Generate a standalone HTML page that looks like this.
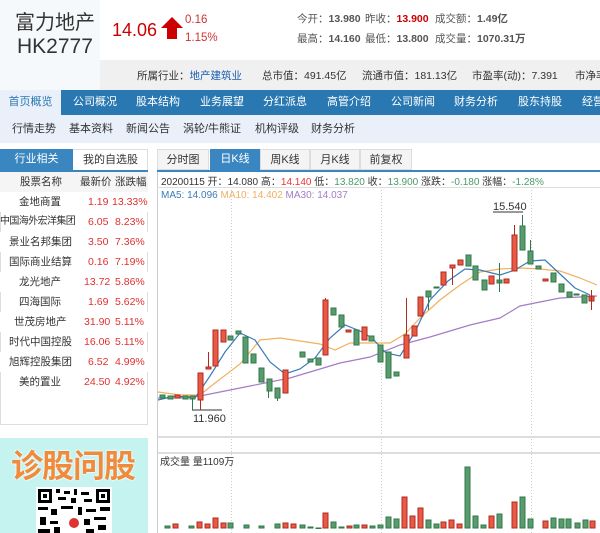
<!DOCTYPE html>
<html><head><meta charset="utf-8"><style>
*{margin:0;padding:0;box-sizing:border-box}
body{width:600px;height:533px;overflow:hidden;background:#fff;font-family:"Liberation Sans","Noto Sans CJK SC",sans-serif;position:relative;color:#333}
.a{position:absolute;white-space:nowrap}
.nav span{position:absolute;top:0;height:25px;line-height:25px;color:#fff;font-size:11px}
.sub span{position:absolute;top:0;line-height:28px;font-size:11px;color:#333}
.tbl div{position:absolute;left:0;width:148px;height:20px;font-size:10.5px;line-height:20px}
.tbl div:nth-child(even){background:#f5f5f5}
.tbl b{font-weight:normal;position:absolute}
.r{color:#e03030}
</style></head><body>
<div class="a" style="left:0;top:0;width:100px;height:90px;background:#f6f9fc"></div>
<div class="a" style="left:15px;top:6px;font-size:20px;color:#333">富力地产</div>
<div class="a" style="left:17px;top:35px;font-size:21px;color:#333">HK2777</div>
<div class="a" style="left:112px;top:20px;font-size:18px;color:#c00">14.06</div>
<svg class="a" style="left:160px;top:16px" width="24" height="24"><path d="M12 1 L23 12 L17 12 L17 23 L7 23 L7 12 L1 12 Z" fill="#c00"/></svg>
<div class="a" style="left:185px;top:14px;font-size:11.5px;color:#c33">0.16</div>
<div class="a" style="left:185px;top:32px;font-size:11.5px;color:#c33">1.15%</div>
<div class="a" style="left:297px;top:11px;font-size:10.5px;color:#555">今开：<b>13.980</b></div>
<div class="a" style="left:365px;top:11px;font-size:10.5px;color:#555">昨收：<b style="color:#c00">13.900</b></div>
<div class="a" style="left:435px;top:11px;font-size:10.5px;color:#555">成交额：<b>1.49亿</b></div>
<div class="a" style="left:297px;top:31px;font-size:10.5px;color:#555">最高：<b>14.160</b></div>
<div class="a" style="left:365px;top:31px;font-size:10.5px;color:#555">最低：<b>13.800</b></div>
<div class="a" style="left:435px;top:31px;font-size:10.5px;color:#555">成交量：<b>1070.31万</b></div>
<div class="a" style="left:100px;top:60px;width:500px;height:30px;background:#f0f0f0"></div>
<div class="a" style="left:137px;top:68px;font-size:10.5px;color:#333">所属行业：<span style="color:#1a5fb4">地产建筑业</span></div>
<div class="a" style="left:262px;top:68px;font-size:10.5px">总市值：491.45亿</div>
<div class="a" style="left:362px;top:68px;font-size:10.5px">流通市值：181.13亿</div>
<div class="a" style="left:472px;top:68px;font-size:10.5px">市盈率(动)：7.391</div>
<div class="a" style="left:575px;top:68px;font-size:10.5px">市净率</div>
<div class="a nav" style="left:0;top:90px;width:600px;height:25px;background:#2a78b2">
<span style="left:0;width:61px;background:#e9f0fa;color:#2a78b2;text-align:center">首页概览</span>
<span style="left:73px">公司概况</span><span style="left:136px">股本结构</span><span style="left:200px">业务展望</span><span style="left:263px">分红派息</span><span style="left:327px">高管介绍</span><span style="left:391px">公司新闻</span><span style="left:454px">财务分析</span><span style="left:518px">股东持股</span><span style="left:582px">经营</span>
</div>
<div class="a sub" style="left:0;top:115px;width:600px;height:28px;background:#e9f0fa">
<span style="left:12px">行情走势</span><span style="left:69px">基本资料</span><span style="left:126px">新闻公告</span><span style="left:183px">涡轮/牛熊证</span><span style="left:255px">机构评级</span><span style="left:311px">财务分析</span>
</div>
<div class="a" style="left:0;top:149px;width:148px;height:276px;border:1px solid #ddd;border-top:none"></div>
<div class="a" style="left:0;top:149px;width:73px;height:21px;background:#3a86c0;color:#fff;font-size:11px;line-height:21px;text-align:center">行业相关</div>
<div class="a" style="left:73px;top:149px;width:75px;height:21px;font-size:11px;line-height:21px;text-align:center;border-top:1px solid #ddd">我的自选股</div>
<div class="a" style="left:0;top:170px;width:148px;height:2px;background:#3a86c0"></div>
<div class="a tbl" style="left:0;top:172px">
<div style="top:0;background:#f5f5f5"><b style="left:20px">股票名称</b><b style="left:80px">最新价</b><b style="left:115px">涨跌幅</b></div>
<div style="top:20px;background:#fff"><b style="left:19px">金地商置</b><b class="r" style="left:88px">1.19</b><b class="r" style="left:112px">13.33%</b></div>
<div style="top:40px"><b style="left:0;font-size:10px;letter-spacing:-0.6px">中国海外宏洋集团</b><b class="r" style="left:88px">6.05</b><b class="r" style="left:115px">8.23%</b></div>
<div style="top:60px;background:#fff"><b style="left:9px">景业名邦集团</b><b class="r" style="left:88px">3.50</b><b class="r" style="left:115px">7.36%</b></div>
<div style="top:80px"><b style="left:9px">国际商业结算</b><b class="r" style="left:88px">0.16</b><b class="r" style="left:115px">7.19%</b></div>
<div style="top:100px;background:#fff"><b style="left:19px">龙光地产</b><b class="r" style="left:84px">13.72</b><b class="r" style="left:115px">5.86%</b></div>
<div style="top:120px"><b style="left:19px">四海国际</b><b class="r" style="left:88px">1.69</b><b class="r" style="left:115px">5.62%</b></div>
<div style="top:140px;background:#fff"><b style="left:14px">世茂房地产</b><b class="r" style="left:84px">31.90</b><b class="r" style="left:115px">5.11%</b></div>
<div style="top:160px"><b style="left:9px">时代中国控股</b><b class="r" style="left:84px">16.06</b><b class="r" style="left:115px">5.11%</b></div>
<div style="top:180px;background:#fff"><b style="left:9px">旭辉控股集团</b><b class="r" style="left:88px">6.52</b><b class="r" style="left:115px">4.99%</b></div>
<div style="top:200px"><b style="left:19px">美的置业</b><b class="r" style="left:84px">24.50</b><b class="r" style="left:115px">4.92%</b></div>
</div>
<div class="a" style="left:0;top:438px;width:148px;height:95px;background:#c4f3f0"></div>
<div class="a" style="left:11px;top:441px;font-size:32px;font-weight:bold;color:#f08a3c;letter-spacing:-1px;text-shadow:0 0 2px #fff,0 0 2px #fff">诊股问股</div>
<svg class="a" style="left:36px;top:487px" width="76" height="46"><rect width="76" height="46" fill="#fff"/>
<rect x="2" y="2" width="14" height="14" fill="#000"/><rect x="5" y="5" width="8" height="8" fill="#fff"/><rect x="7" y="7" width="4" height="4" fill="#000"/>
<rect x="60" y="2" width="14" height="14" fill="#000"/><rect x="63" y="5" width="8" height="8" fill="#fff"/><rect x="65" y="7" width="4" height="4" fill="#000"/>
<g fill="#000"><rect x="20" y="2" width="4" height="4"/><rect x="28" y="4" width="6" height="3"/><rect x="38" y="2" width="3" height="6"/><rect x="45" y="5" width="8" height="3"/><rect x="22" y="10" width="8" height="3"/><rect x="35" y="11" width="5" height="5"/><rect x="48" y="12" width="8" height="3"/><rect x="2" y="20" width="10" height="3"/><rect x="15" y="22" width="6" height="6"/><rect x="25" y="19" width="12" height="3"/><rect x="42" y="20" width="4" height="8"/><rect x="50" y="22" width="10" height="3"/><rect x="64" y="20" width="10" height="4"/><rect x="4" y="30" width="6" height="8"/><rect x="14" y="34" width="8" height="3"/><rect x="48" y="32" width="6" height="6"/><rect x="58" y="30" width="12" height="3"/><rect x="62" y="38" width="8" height="5"/><rect x="2" y="42" width="12" height="4"/><rect x="18" y="40" width="6" height="6"/><rect x="50" y="42" width="8" height="4"/></g>
<circle cx="38" cy="36" r="8" fill="#fff"/><circle cx="38" cy="36" r="5" fill="#d33"/></svg>
<div class="a" style="left:157px;top:149px;width:443px;height:384px;border-left:1px solid #ccc"></div>
<div class="a" style="left:157px;top:149px;width:52px;height:21px;border:1px solid #ddd;background:#f4f4f4;font-size:11px;line-height:20px;text-align:center">分时图</div>
<div class="a" style="left:210px;top:149px;width:50px;height:21px;background:#3a86c0;color:#fff;font-size:11px;line-height:21px;text-align:center">日K线</div>
<div class="a" style="left:260px;top:149px;width:50px;height:21px;border:1px solid #ddd;background:#f4f4f4;font-size:11px;line-height:20px;text-align:center">周K线</div>
<div class="a" style="left:310px;top:149px;width:50px;height:21px;border:1px solid #ddd;background:#f4f4f4;font-size:11px;line-height:20px;text-align:center">月K线</div>
<div class="a" style="left:360px;top:149px;width:52px;height:21px;border:1px solid #ddd;background:#f4f4f4;font-size:11px;line-height:20px;text-align:center">前复权</div>
<div class="a" style="left:157px;top:170px;width:443px;height:2px;background:#3a86c0"></div>
<div class="a" style="left:157px;top:172px;width:443px;height:16px;border-bottom:1px solid #ddd"></div>
<div class="a" style="left:161px;top:173px;font-size:10px;color:#333">20200115 开：14.080 高：<span style="color:#e33">14.140</span> 低：<span style="color:#4a9a6a">13.820</span> 收：<span style="color:#4a9a6a">13.900</span> 涨跌：<span style="color:#4a9a6a">-0.180</span> 涨幅：<span style="color:#4a9a6a">-1.28%</span></div>
<div class="a" style="left:161px;top:190px;font-size:10px;color:#3a7bb8">MA5: 14.096 <span style="color:#f0b060">MA10: 14.402</span> <span style="color:#a47cc8">MA30: 14.037</span></div>
<svg class="a" style="left:0;top:0" width="600" height="533">
<g stroke="#ccc" stroke-dasharray="1,2"><line x1="231.5" y1="190" x2="231.5" y2="533"/><line x1="381.5" y1="190" x2="381.5" y2="533"/><line x1="531.5" y1="190" x2="531.5" y2="533"/></g>
<rect x="158" y="436" width="442" height="2" fill="#ddd"/><rect x="158" y="452" width="442" height="2" fill="#ddd"/>
<line x1="192" y1="410" x2="222" y2="410" stroke="#333"/>
<text x="193" y="422" font-size="11" fill="#333" font-family="Liberation Sans">11.960</text>
<line x1="493" y1="212" x2="523" y2="212" stroke="#333"/>
<text x="493" y="210" font-size="11" fill="#333" font-family="Liberation Sans">15.540</text>
<text x="160" y="465" font-size="10" fill="#333" font-family="Liberation Sans,Noto Sans CJK SC">成交量 量1109万</text>
<polyline fill="none" stroke="#a47cc8" stroke-width="1.2" points="158,398 180,398 200,396 230,390 260,384 290,378 310,372 340,363 370,357 400,345 430,337 470,325 500,318 520,306 540,302 560,298 580,297 597,296"/>
<polyline fill="none" stroke="#f0b060" stroke-width="1.2" points="158,392 180,395 200,395 215,383 240,364 260,340 280,338 300,341 320,344 335,350 350,343 370,343 390,343 405,334 420,318 440,300 460,285 480,272 500,269 520,268 540,269 560,271 580,278 597,285"/>
<polyline fill="none" stroke="#3a7bb8" stroke-width="1.2" points="158,400 175,396 195,398 210,376 225,352 240,333 255,340 270,362 285,374 300,369 315,358 330,338 345,325 360,331 372,338 386,353 400,356 415,332 430,300 448,281 465,269 480,270 500,275 515,270 530,261 545,260 560,274 575,288 590,295"/>
<g stroke-width="1">
<g fill="#5a9a6e" stroke="#2f7a48">
<rect x="160" y="395" width="5" height="3"/><rect x="168" y="396" width="5" height="3"/><rect x="183" y="396" width="5" height="3"/><rect x="190" y="396" width="5" height="3"/>
<rect x="228" y="336" width="5" height="4"/><rect x="236" y="331" width="5" height="3"/><rect x="243" y="337" width="5" height="26"/><rect x="251" y="354" width="5" height="9"/><rect x="259" y="368" width="5" height="14"/><rect x="267" y="379" width="5" height="12"/><rect x="275" y="388" width="5" height="10"/>
<rect x="300" y="352" width="5" height="5"/><rect x="308" y="359" width="5" height="3"/><rect x="316" y="358" width="5" height="7"/><rect x="331" y="308" width="5" height="7"/><rect x="339" y="315" width="5" height="12"/><rect x="354" y="330" width="5" height="15"/><rect x="369" y="336" width="5" height="5"/><rect x="378" y="345" width="5" height="17"/><rect x="386" y="352" width="5" height="26"/><rect x="394" y="372" width="5" height="4"/>
<rect x="426" y="291" width="5" height="6"/><rect x="434" y="287" width="5" height="1"/><rect x="466" y="255" width="5" height="11"/><rect x="473" y="266" width="5" height="14"/><rect x="482" y="280" width="5" height="10"/><rect x="497" y="280" width="5" height="3"/>
<rect x="520" y="226" width="5" height="24"/><rect x="528" y="251" width="5" height="13"/><rect x="536" y="266" width="5" height="3"/><rect x="551" y="273" width="5" height="9"/><rect x="559" y="284" width="5" height="8"/><rect x="567" y="292" width="5" height="5"/><rect x="574" y="294" width="5" height="1"/><rect x="582" y="295" width="5" height="8"/>
</g>
<g fill="#e85a44" stroke="#b02a20">
<rect x="175" y="395" width="5" height="3"/><rect x="198" y="373" width="5" height="27"/><rect x="206" y="367" width="5" height="2"/><rect x="213" y="330" width="5" height="36"/><rect x="221" y="330" width="5" height="12"/><rect x="283" y="370" width="5" height="23"/>
<rect x="323" y="300" width="5" height="55"/><rect x="346" y="330" width="5" height="2"/><rect x="362" y="327" width="5" height="13"/><rect x="404" y="335" width="5" height="23"/><rect x="412" y="326" width="5" height="10"/><rect x="418" y="297" width="5" height="19"/><rect x="441" y="272" width="5" height="13"/><rect x="450" y="265" width="5" height="3"/><rect x="458" y="260" width="5" height="5"/><rect x="489" y="276" width="5" height="8"/><rect x="504" y="279" width="5" height="4"/><rect x="512" y="235" width="5" height="36"/><rect x="543" y="279" width="5" height="2"/><rect x="589" y="296" width="5" height="5"/>
</g>
<g stroke="#2f7a48"><line x1="192.5" y1="398" x2="192.5" y2="410"/><line x1="522.5" y1="215" x2="522.5" y2="226"/><line x1="530.5" y1="240" x2="530.5" y2="251"/><line x1="428.5" y1="297" x2="428.5" y2="310"/><line x1="499.5" y1="263" x2="499.5" y2="292"/><line x1="268.5" y1="391" x2="268.5" y2="398"/><line x1="277.5" y1="398" x2="277.5" y2="401"/></g>
<g stroke="#b02a20"><line x1="200.5" y1="400" x2="200.5" y2="410"/><line x1="208.5" y1="352" x2="208.5" y2="367"/><line x1="325.5" y1="298" x2="325.5" y2="300"/><line x1="406.5" y1="298" x2="406.5" y2="335"/><line x1="514.5" y1="225" x2="514.5" y2="235"/><line x1="591.5" y1="290" x2="591.5" y2="310"/><line x1="452.5" y1="268" x2="452.5" y2="285"/></g>
</g>
<g fill="#5a9a6e" stroke="#2f7a48">
<rect x="165" y="526" width="5" height="2"/><rect x="189" y="526" width="5" height="2"/><rect x="228" y="523" width="5" height="5"/><rect x="244" y="525" width="5" height="3"/><rect x="259" y="526" width="5" height="2"/><rect x="275" y="524" width="5" height="4"/>
<rect x="300" y="525" width="5" height="3"/><rect x="308" y="527" width="5" height="1"/><rect x="316" y="528" width="5" height="0.5"/><rect x="331" y="522" width="5" height="6"/><rect x="339" y="527" width="5" height="1"/><rect x="354" y="525" width="5" height="3"/><rect x="370" y="526" width="5" height="2"/><rect x="378" y="525" width="5" height="3"/><rect x="386" y="517" width="5" height="11"/><rect x="394" y="519" width="5" height="9"/><rect x="426" y="520" width="5" height="8"/><rect x="434" y="524" width="5" height="4"/><rect x="465" y="467" width="5" height="61"/><rect x="473" y="516" width="5" height="12"/><rect x="481" y="525" width="5" height="3"/><rect x="497" y="514" width="5" height="14"/><rect x="520" y="497" width="5" height="31"/><rect x="528" y="519" width="5" height="9"/><rect x="551" y="518" width="5" height="10"/><rect x="559" y="519" width="5" height="9"/><rect x="566" y="519" width="5" height="9"/><rect x="575" y="523" width="5" height="5"/><rect x="583" y="520" width="5" height="8"/>
</g>
<g fill="#e85a44" stroke="#b02a20">
<rect x="173" y="524" width="5" height="4"/><rect x="197" y="522" width="5" height="6"/><rect x="205" y="524" width="5" height="4"/><rect x="213" y="518" width="5" height="10"/><rect x="221" y="523" width="5" height="5"/><rect x="283" y="523" width="5" height="5"/><rect x="291" y="524" width="5" height="4"/>
<rect x="323" y="513" width="5" height="15"/><rect x="347" y="526" width="5" height="2"/><rect x="362" y="525" width="5" height="3"/><rect x="402" y="497" width="5" height="31"/><rect x="410" y="516" width="5" height="12"/><rect x="418" y="508" width="5" height="20"/><rect x="441" y="522" width="5" height="6"/><rect x="449" y="520" width="5" height="8"/><rect x="457" y="524" width="5" height="4"/><rect x="489" y="516" width="5" height="12"/><rect x="512" y="502" width="5" height="26"/><rect x="543" y="521" width="5" height="7"/><rect x="590" y="521" width="5" height="7"/>
</g>
</svg>
</body></html>
